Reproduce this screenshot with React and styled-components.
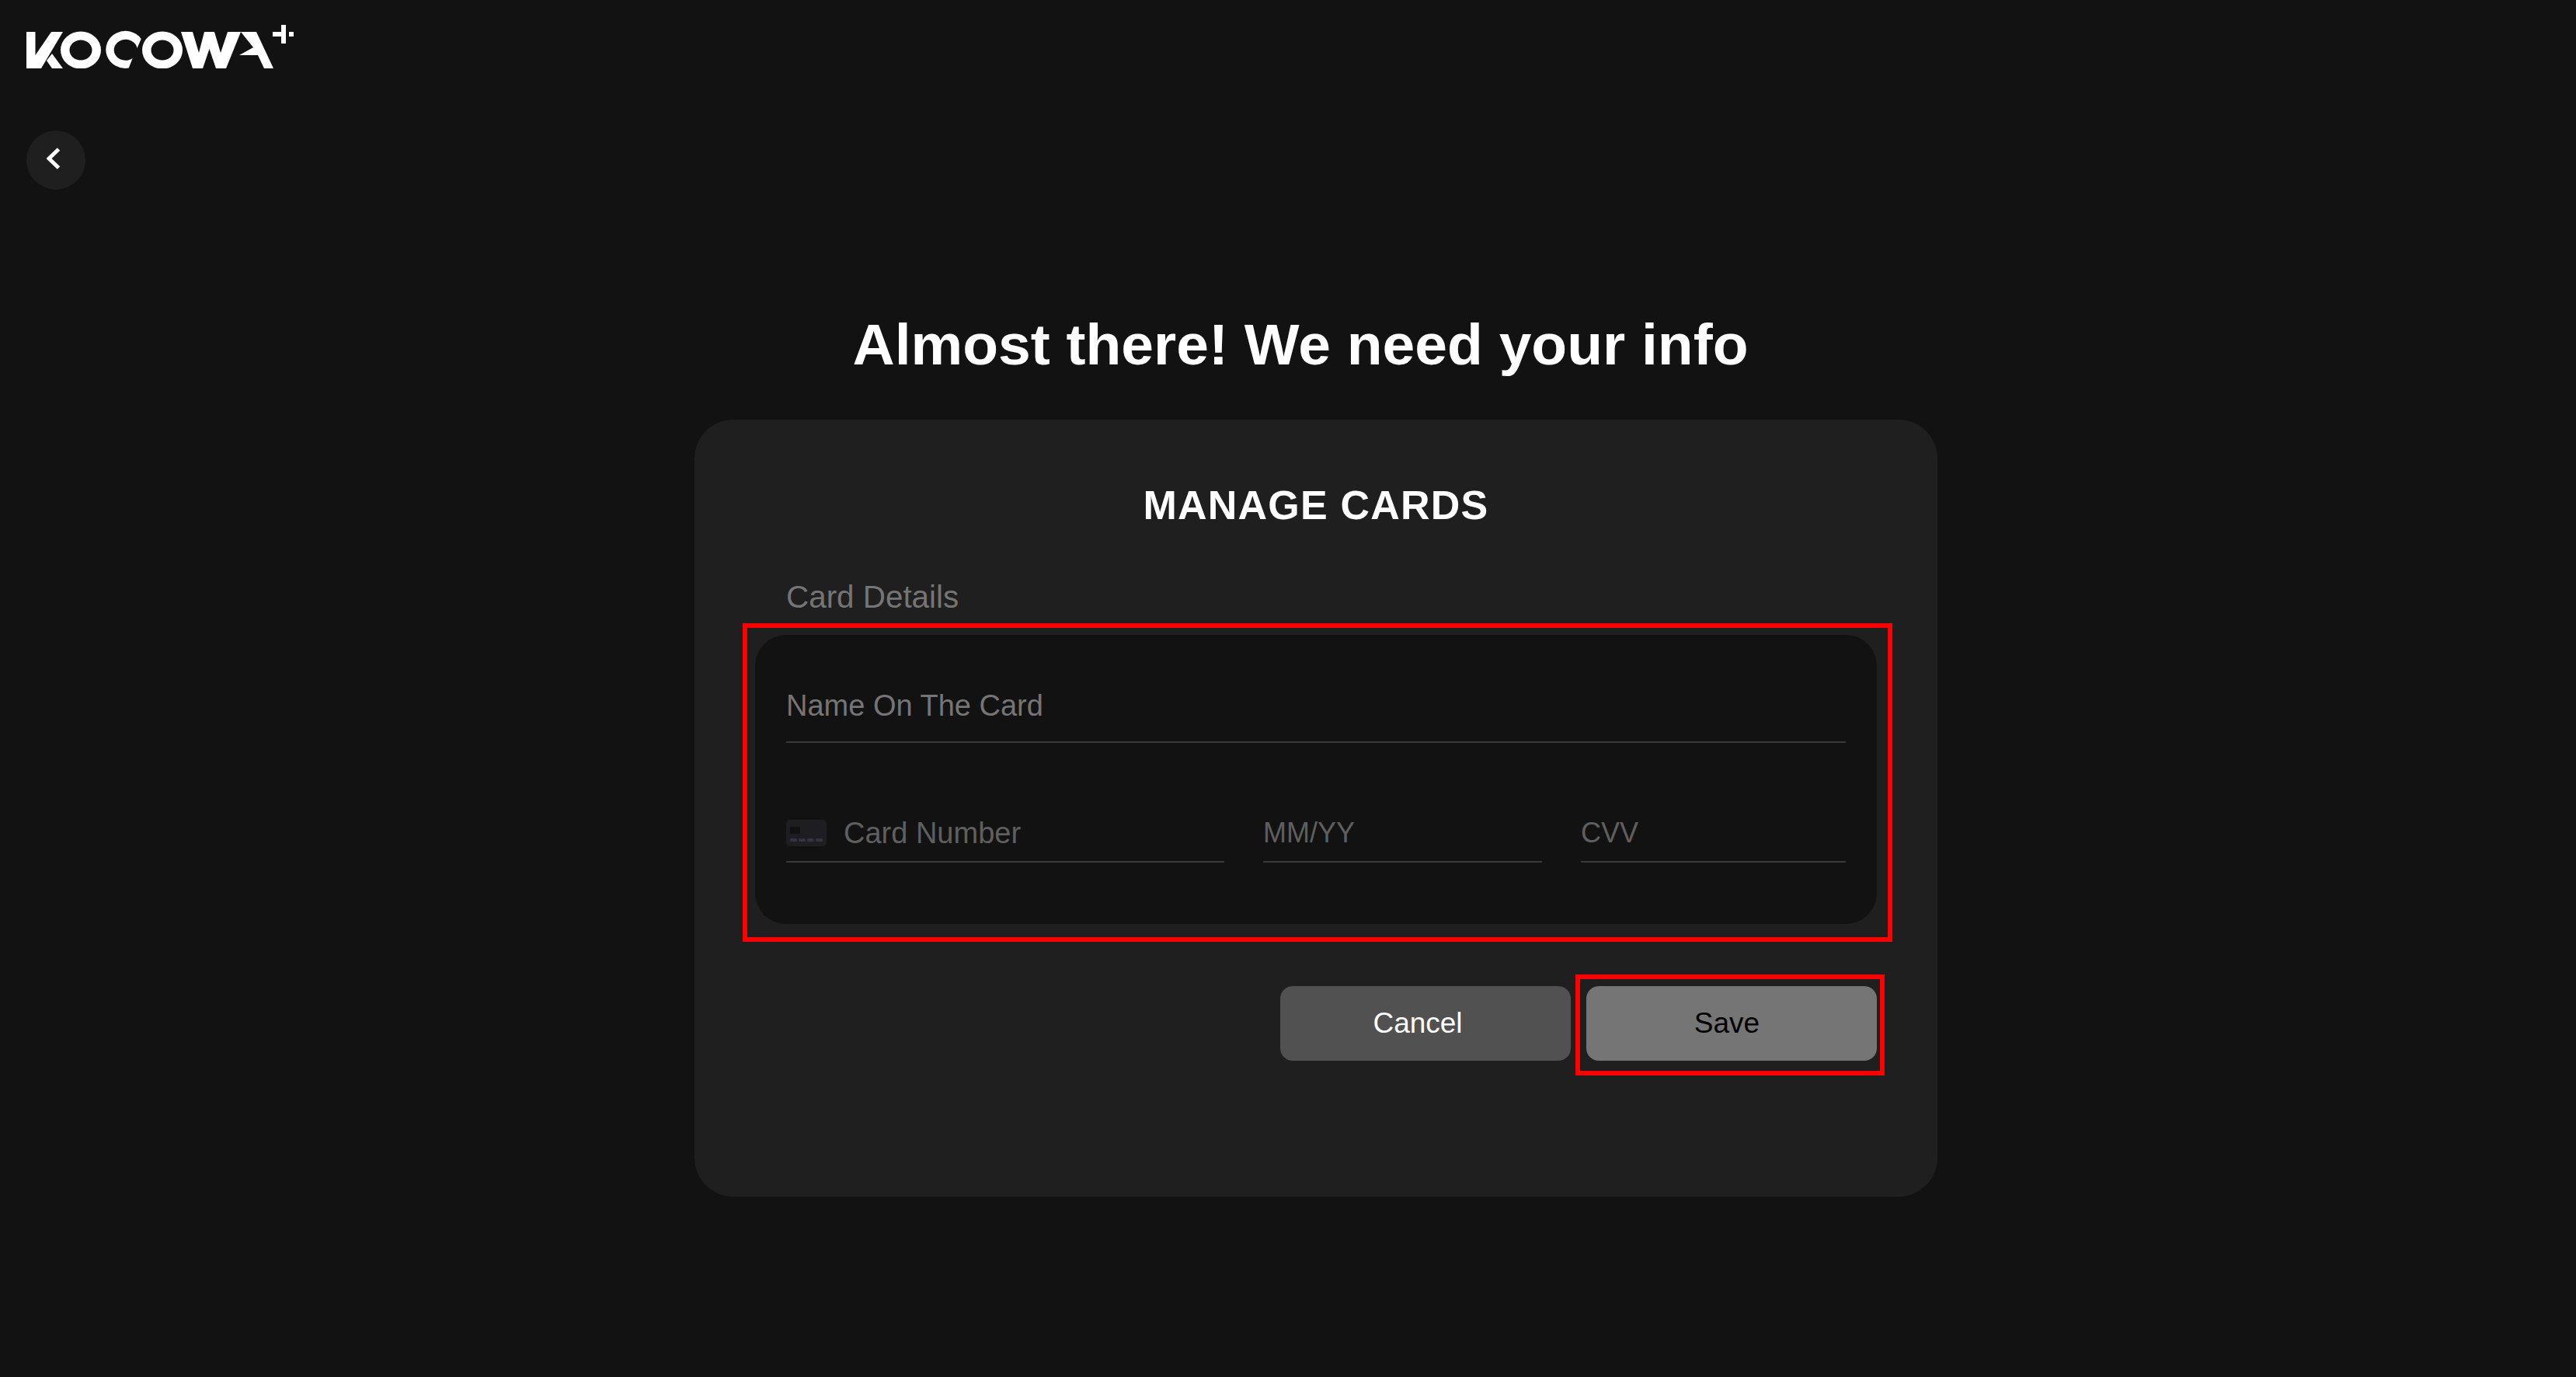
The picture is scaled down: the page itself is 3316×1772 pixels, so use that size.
import React from 'react';
import styled, { createGlobalStyle } from 'styled-components';

const GlobalStyle = createGlobalStyle`
  html, body {
    margin: 0;
    padding: 0;
    background-color: #121212;
  }
  * {
    box-sizing: border-box;
  }
`;

const Page = styled.div`
  min-height: 1772px;
  padding: 32px 34px 0;
  background-color: #121212;
  color: #fff;
  font-family: "Liberation Sans", Arial, sans-serif;
`;

const Logo = styled.svg`
  display: block;
  width: 346px;
  height: 56px;
  fill: #fff;
`;

const BackButton = styled.button`
  display: flex;
  align-items: center;
  justify-content: center;
  width: 76px;
  height: 76px;
  margin-top: 80px;
  padding: 0 7px 4px 0;
  border: none;
  border-radius: 50%;
  background-color: #1f1f1f;
  color: #fff;
`;

const Content = styled.main`
  width: 1600px;
  margin-left: 860px;
`;

const Heading = styled.h1`
  height: 142px;
  margin: 154px 40px 0 0;
  font-size: 75px;
  line-height: 90px;
  font-weight: 700;
  text-align: center;
`;

const Card = styled.section`
  height: 1000px;
  padding: 78px 78px 0;
  border-radius: 50px;
  background-color: #1f1f1f;
`;

const CardTitle = styled.h2`
  margin: 0;
  font-size: 52px;
  line-height: 64px;
  font-weight: 700;
  letter-spacing: 1.2px;
  text-align: center;
`;

const SectionLabel = styled.div`
  margin-top: 62px;
  padding-left: 40px;
  font-size: 40.4px;
  line-height: 48px;
  color: #757575;
`;

const PanelWrap = styled.div`
  position: relative;
  margin-top: 25px;
`;

const Panel = styled.div`
  height: 372px;
  padding: 0 40px;
  border-radius: 40px;
  background-color: #121212;
`;

const Highlight = styled.div`
  position: absolute;
  top: ${(p) => p.$top}px;
  right: ${(p) => p.$right}px;
  bottom: ${(p) => p.$bottom}px;
  left: ${(p) => p.$left}px;
  border: 6px solid #ff0000;
  pointer-events: none;
`;

const Field = styled.div`
  display: flex;
  align-items: center;
  flex: ${(p) => p.$width}px 0 0;
  gap: 22px;
  height: ${(p) => p.$height}px;
  padding: ${(p) => p.$top || 0}px 0 ${(p) => p.$bottom || 0}px;
  border-bottom: 2px solid #3a3a3a;
`;

const NameRow = styled.div`
  display: flex;
  padding-top: 57px;
`;

const CardRow = styled.div`
  display: flex;
  gap: 50px;
  margin-top: 74px;
`;

const Placeholder = styled.span`
  font-size: ${(p) => p.$size}px;
  line-height: 48px;
  color: ${(p) => p.$color};
`;

const CardIcon = styled.svg`
  display: block;
  flex: none;
  width: 52px;
  height: 34px;
`;

const Actions = styled.div`
  display: flex;
  justify-content: flex-end;
  gap: 20px;
  margin-top: 80px;
`;

const ActionButton = styled.button`
  position: relative;
  width: 374px;
  height: 96px;
  padding: 0 ${(p) => p.$inset}px 0 0;
  border: none;
  border-radius: 16px;
  background-color: ${(p) => p.$bg};
  color: ${(p) => p.$fg};
  font-family: inherit;
  font-size: 37px;
`;

const KocowaLogo = () => (
  <Logo viewBox="34 32 346 56" aria-label="KOCOWA+">
    <path d="M34 41H45.5V71L66 41H81L53 88H34Z" />
    <path d="M67 69L81 88H67L60 78Z" />
    <path
      fillRule="evenodd"
      d="M104 40.5a26 24 0 1 0 0 48a26 24 0 1 0 0-48ZM104 51.5a14.5 13 0 1 1 0 26a14.5 13 0 1 1 0-26Z"
    />
    <path d="M181.7 50A25 24 0 1 0 165.7 87.5L170.7 75A15 13.5 0 1 1 176.5 62Z" />
    <path
      fillRule="evenodd"
      d="M209 40.5a26 24 0 1 0 0 48a26 24 0 1 0 0-48ZM209 51.5a14.5 13 0 1 1 0 26a14.5 13 0 1 1 0-26Z"
    />
    <path d="M233 41H248L256 68L263 41H276L284 68L293 41H310L291 88H278L269.5 63L261 88H248Z" />
    <path d="M310 41H330L352 88H340L332 71H308L326 61Z" />
    <path d="M351 41H362V32H368V56H362V47H351Z" />
    <path d="M372 41H378V47H372Z" />
  </Logo>
);

const CardGlyph = () => (
  <CardIcon viewBox="0 0 52 34">
    <rect width="52" height="34" rx="5" fill="#1e1e22" />
    <rect x="5" y="9" width="13" height="9" rx="1.5" fill="#111" />
    <rect x="5" y="24" width="9" height="4" rx="1.5" fill="#33343f" />
    <rect x="16" y="24" width="9" height="4" rx="1.5" fill="#33343f" />
    <rect x="27" y="24" width="9" height="4" rx="1.5" fill="#33343f" />
    <rect x="38" y="24" width="9" height="4" rx="1.5" fill="#33343f" />
  </CardIcon>
);

const App = () => {
  return (
    <Page>
      <GlobalStyle />
      <KocowaLogo />
      <BackButton aria-label="Back">
        <svg width="18" height="28" viewBox="0 0 18 28" fill="none">
          <path d="M15.5 2L3 14L15.5 26" stroke="currentColor" strokeWidth="5" />
        </svg>
      </BackButton>
      <Content>
        <Heading>Almost there! We need your info</Heading>
        <Card>
          <CardTitle>MANAGE CARDS</CardTitle>
          <SectionLabel>Card Details</SectionLabel>
          <PanelWrap>
            <Panel>
              <NameRow>
                <Field $width={1364} $height={82} $bottom={12}>
                  <Placeholder $size={38} $color="#757575">Name On The Card</Placeholder>
                </Field>
              </NameRow>
              <CardRow>
                <Field $width={564} $height={80} $top={6}>
                  <CardGlyph />
                  <Placeholder $size={38} $color="#5f5f5f">Card Number</Placeholder>
                </Field>
                <Field $width={359} $height={80} $top={6}>
                  <Placeholder $size={36} $color="#5f5f5f">MM/YY</Placeholder>
                </Field>
                <Field $width={341} $height={80} $top={6}>
                  <Placeholder $size={36} $color="#5f5f5f">CVV</Placeholder>
                </Field>
              </CardRow>
            </Panel>
            <Highlight $top={-15} $right={-20} $bottom={-23} $left={-16} />
          </PanelWrap>
          <Actions>
            <ActionButton $bg="#515151" $fg="#fff" $inset={20}>Cancel</ActionButton>
            <ActionButton $bg="#757575" $fg="#000" $inset={12}>
              Save
              <Highlight $top={-15} $right={-10} $bottom={-19} $left={-14} />
            </ActionButton>
          </Actions>
        </Card>
      </Content>
    </Page>
  );
};

export default App;
